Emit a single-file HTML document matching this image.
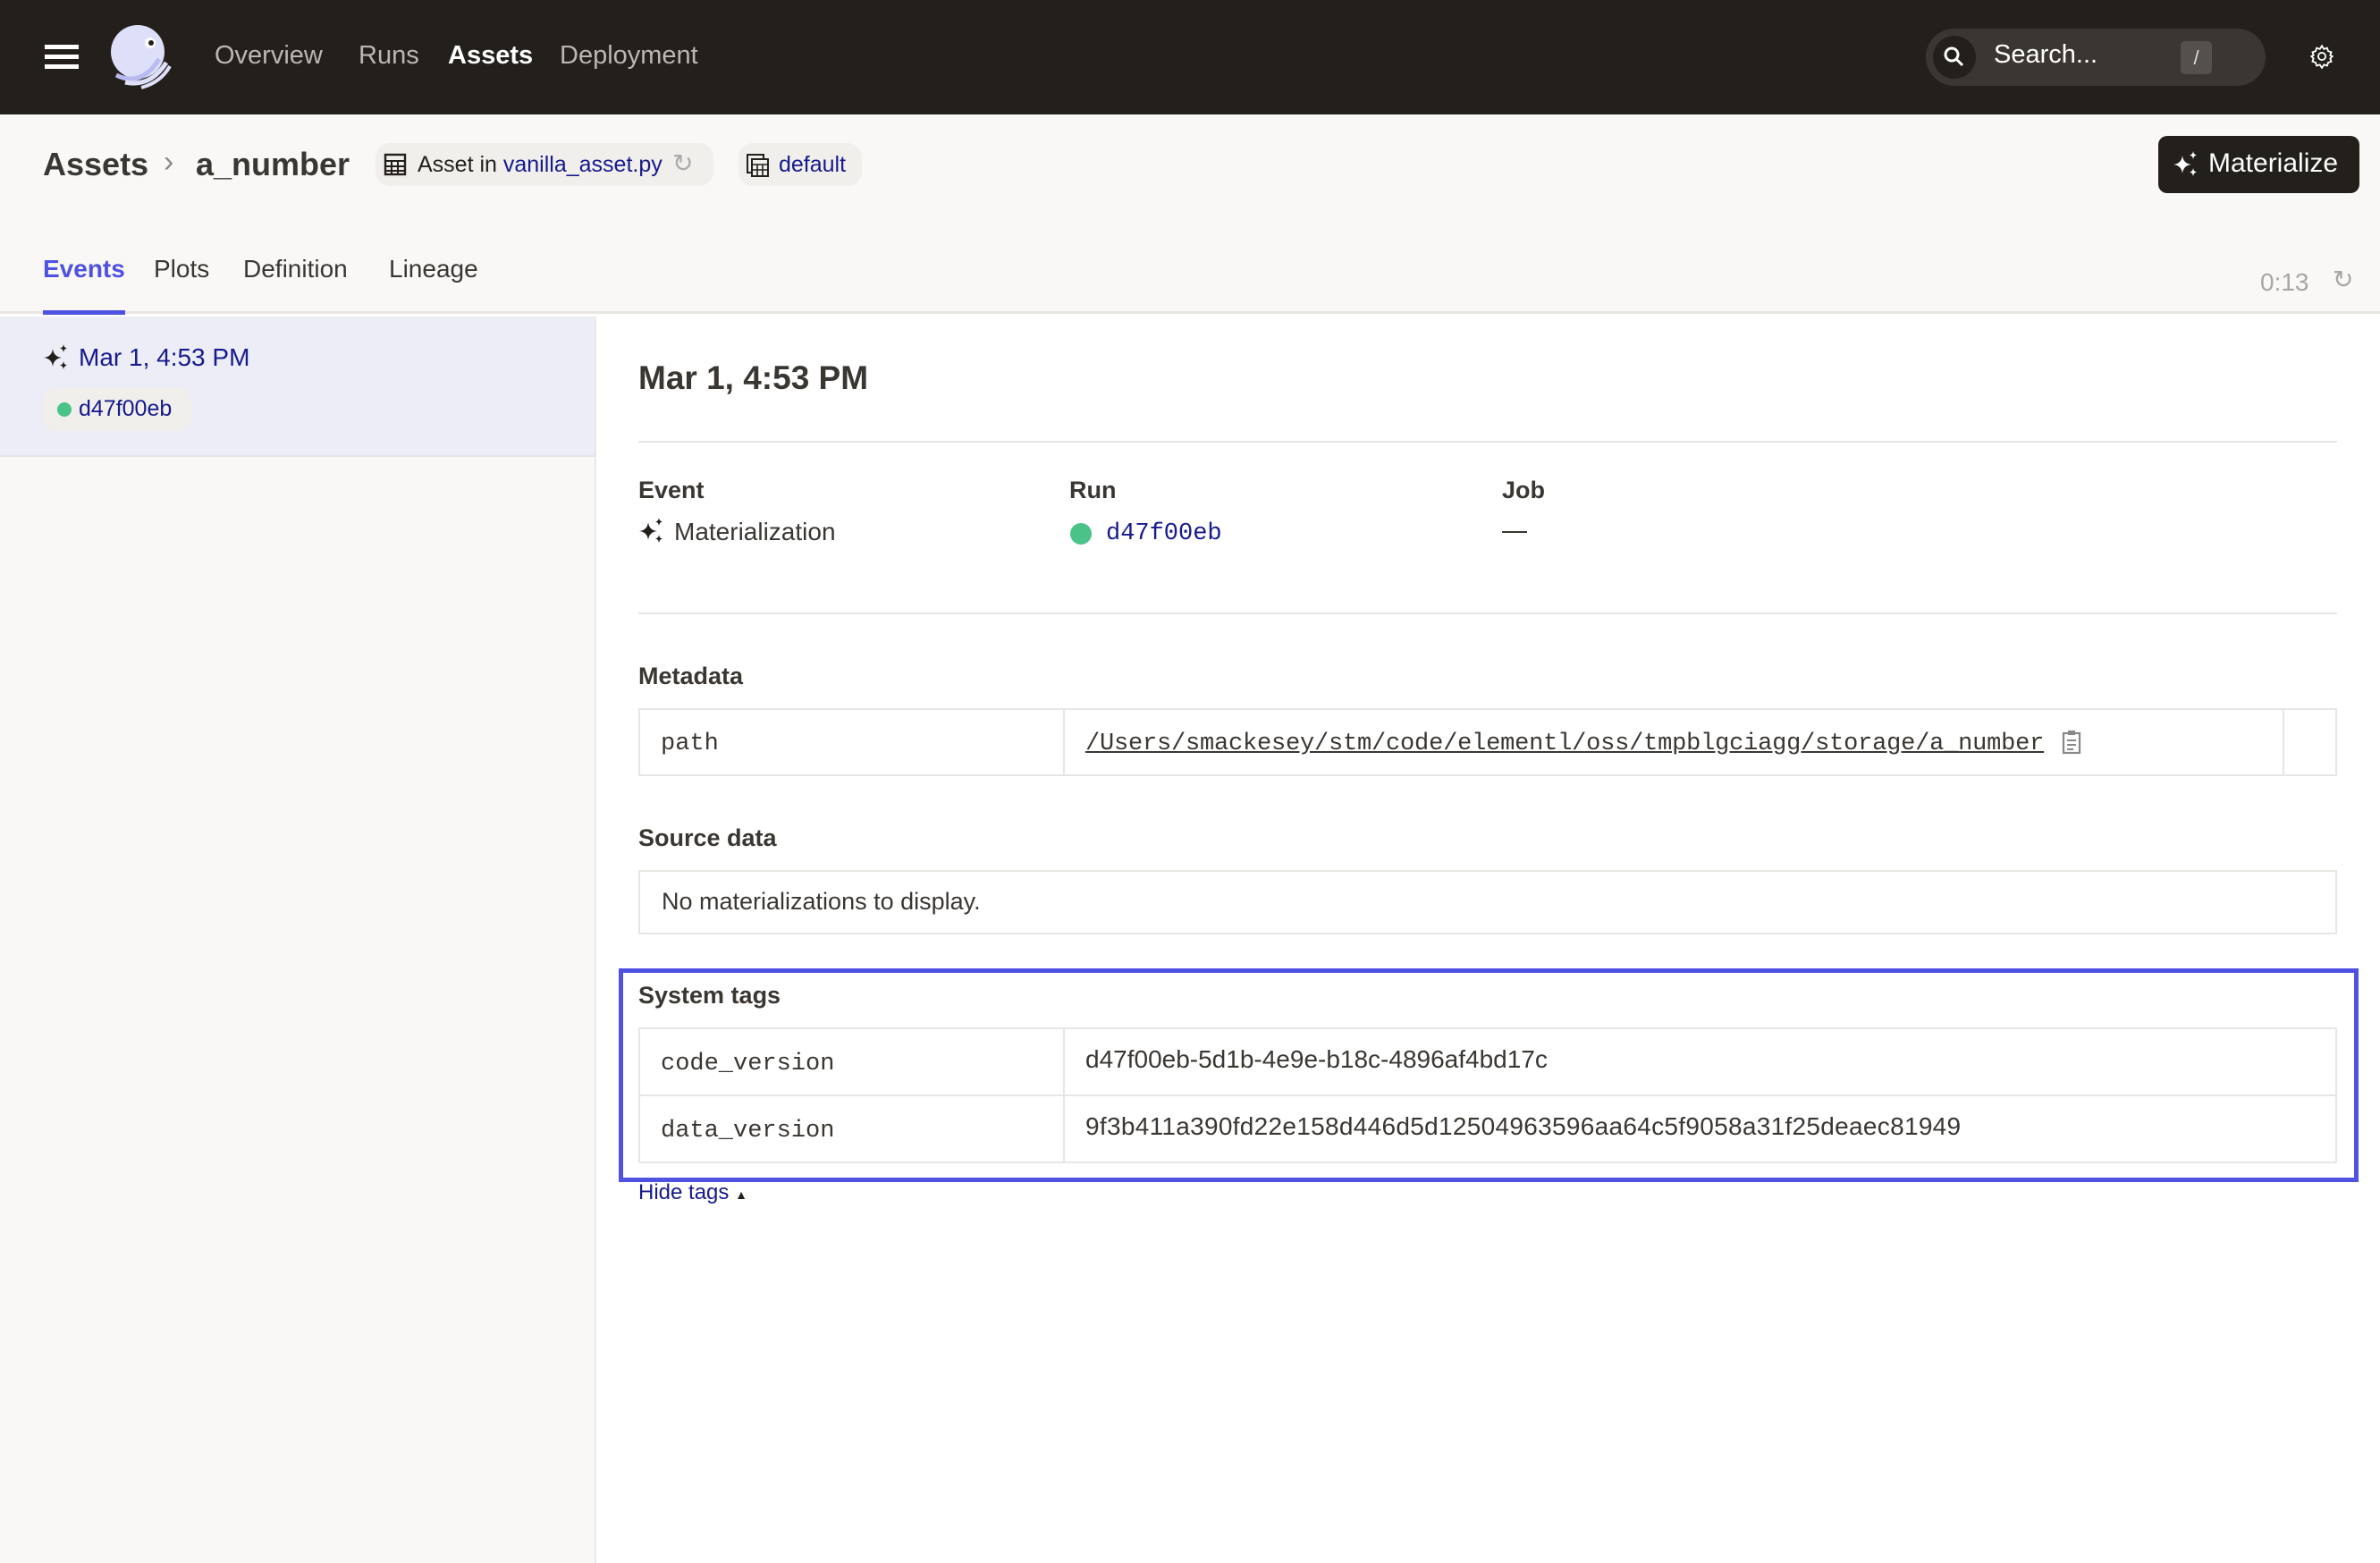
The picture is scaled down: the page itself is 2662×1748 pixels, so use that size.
<!DOCTYPE html>
<html><head><meta charset="utf-8"><style>
*{margin:0;padding:0;box-sizing:border-box}
body{width:2662px;height:1748px;background:#fff;font-family:"Liberation Sans",sans-serif;color:#231f1b;position:relative;overflow:hidden}
.a{position:absolute;white-space:nowrap}
.mono{font-family:"Liberation Mono",monospace}
</style></head><body>
<svg width="0" height="0" style="position:absolute"><defs><symbol id="sp" viewBox="0 0 30 30"><path d="M11 6 Q12 15 21 16 Q12 17 11 26 Q10 17 1 16 Q10 15 11 6Z"/><path d="M23 1 Q23.5 5 27 5.5 Q23.5 6 23 10 Q22.5 6 19 5.5 Q22.5 5 23 1Z"/><path d="M23 20 Q23.5 24 27 24.5 Q23.5 25 23 29 Q22.5 25 19 24.5 Q22.5 24 23 20Z"/></symbol></defs></svg>
<!-- header -->
<div class="a" style="left:0;top:0;width:2662px;height:128px;background:#231f1b"></div>
<div class="a" style="left:50px;top:50px;width:38px;height:5px;background:#fff;box-shadow:0 11px 0 #fff,0 22px 0 #fff"></div>
<svg class="a" style="left:118px;top:26px" width="78" height="76" viewBox="0 0 78 76">
<ellipse cx="36" cy="32" rx="30" ry="30" fill="#dedff8"/>
<circle cx="50" cy="22" r="6" fill="#fff"/><circle cx="51" cy="22" r="3" fill="#231f1b"/>
<path d="M12 58 Q40 72 60 40" stroke="#b8baf0" stroke-width="5" fill="none"/>
<path d="M22 66 Q50 72 68 44" stroke="#dedff8" stroke-width="5" fill="none"/>
<path d="M40 72 Q62 66 72 48" stroke="#dedff8" stroke-width="4" fill="none"/>
</svg>
<div class="a" style="left:240px;top:46px;font-size:29px;color:#bab6b2">Overview</div>
<div class="a" style="left:401px;top:46px;font-size:29px;color:#bab6b2">Runs</div>
<div class="a" style="left:501px;top:46px;font-size:29px;color:#fff;font-weight:bold">Assets</div>
<div class="a" style="left:626px;top:46px;font-size:29px;color:#bab6b2">Deployment</div>
<div class="a" style="left:2154px;top:32px;width:380px;height:64px;border-radius:32px;background:#3b3632"></div>
<div class="a" style="left:2162px;top:40px;width:48px;height:48px;border-radius:24px;background:#231f1b"></div>
<svg class="a" style="left:2173px;top:51px" width="26" height="26" viewBox="0 0 26 26"><circle cx="10" cy="10" r="7" stroke="#fff" stroke-width="3" fill="none"/><path d="M15 15 L22 22" stroke="#fff" stroke-width="3"/></svg>
<div class="a" style="left:2230px;top:45px;font-size:29px;color:#fff">Search...</div>
<div class="a" style="left:2439px;top:46px;width:35px;height:37px;border-radius:5px;background:#54504c;color:#ddd;font-size:22px;text-align:center;line-height:37px">/</div>
<svg class="a" style="left:2583px;top:49px" width="28" height="28" viewBox="0 0 24 24"><path d="M12 2l2 3 3-1 1 3 3 1-1 3 2 1-2 2 1 3-3 1-1 3-3-1-2 3-2-3-3 1-1-3-3-1 1-3-2-2 2-1-1-3 3-1 1-3 3 1z" stroke="#fff" stroke-width="1.6" fill="none"/><circle cx="12" cy="12" r="3.5" stroke="#fff" stroke-width="1.6" fill="none"/></svg>
<!-- top area -->
<div class="a" style="left:0;top:128px;width:2662px;height:223px;background:#f9f8f6;border-bottom:3px solid #e8e6e3"></div>
<div class="a" style="left:48px;top:163px;font-size:36px;font-weight:bold;color:#3a3632">Assets</div>
<div class="a" style="left:183px;top:162px;font-size:34px;color:#8d8985">›</div>
<div class="a" style="left:219px;top:163px;font-size:36px;font-weight:bold;color:#3a3632">a_number</div>
<div class="a" style="left:420px;top:160px;width:378px;height:48px;border-radius:16px;background:#f1efec"></div>
<svg class="a" style="left:429px;top:171px" width="26" height="26" viewBox="0 0 26 26"><rect x="2" y="2" width="22" height="22" stroke="#231f1b" stroke-width="2.4" fill="none"/><path d="M2 9H24M2 15H24M2 20H24M9 9V24M16 9V24" stroke="#231f1b" stroke-width="2"/></svg>
<div class="a" style="left:467px;top:170px;font-size:25px;color:#231f1b">Asset in <span style="color:#161a8c">vanilla_asset.py</span></div>
<div class="a" style="left:752px;top:166px;font-size:28px;color:#aaa">↻</div>
<div class="a" style="left:826px;top:160px;width:138px;height:48px;border-radius:16px;background:#f1efec"></div>
<svg class="a" style="left:834px;top:171px" width="28" height="28" viewBox="0 0 28 28"><rect x="2" y="2" width="18" height="20" stroke="#231f1b" stroke-width="2" fill="none"/><rect x="7" y="7" width="18" height="19" stroke="#231f1b" stroke-width="2" fill="#f1efec"/><path d="M7 13H25M7 19H25M13 13V26M19 13V26" stroke="#231f1b" stroke-width="1.6"/></svg>
<div class="a" style="left:871px;top:170px;font-size:25px;color:#161a8c">default</div>
<div class="a" style="left:2414px;top:152px;width:225px;height:64px;border-radius:10px;background:#231f1b"></div>
<svg class="a" style="left:2430px;top:168px;fill:#fff" width="30" height="30"><use href="#sp"/></svg>
<div class="a" style="left:2470px;top:166px;font-size:30px;color:#fff">Materialize</div>
<div class="a" style="left:48px;top:285px;font-size:28px;font-weight:bold;color:#4f52e0">Events</div>
<div class="a" style="left:172px;top:285px;font-size:28px;color:#3a3632">Plots</div>
<div class="a" style="left:272px;top:285px;font-size:28px;color:#3a3632">Definition</div>
<div class="a" style="left:435px;top:285px;font-size:28px;color:#3a3632">Lineage</div>
<div class="a" style="left:48px;top:347px;width:92px;height:5px;background:#4f52e0"></div>
<div class="a" style="left:2528px;top:300px;font-size:28px;color:#a9a6a2">0:13</div>
<div class="a" style="left:2609px;top:296px;font-size:28px;color:#a9a6a2">↻</div>
<!-- left panel -->
<div class="a" style="left:0;top:354px;width:667px;height:1394px;background:#f9f8f6;border-right:2px solid #ebe9e6"></div>
<div class="a" style="left:0;top:354px;width:665px;height:157px;background:#ededf7;border-bottom:2px solid #e6e4e8"></div>
<svg class="a" style="left:48px;top:384px;fill:#231f1b" width="30" height="30"><use href="#sp"/></svg>
<div class="a" style="left:88px;top:384px;font-size:28px;color:#161a8c">Mar 1, 4:53 PM</div>
<div class="a" style="left:48px;top:434px;width:166px;height:48px;border-radius:14px;background:#f1efec"></div>
<div class="a" style="left:64px;top:450px;width:16px;height:16px;border-radius:8px;background:#4ac288"></div>
<div class="a" style="left:88px;top:443px;font-size:25px;color:#161a8c">d47f00eb</div>
<!-- detail -->
<div class="a" style="left:714px;top:402px;font-size:37px;font-weight:bold;color:#3a3632">Mar 1, 4:53 PM</div>
<div class="a" style="left:714px;top:493px;width:1900px;height:2px;background:#e8e6e3"></div>
<div class="a" style="left:714px;top:533px;font-size:27px;font-weight:bold;color:#3a3632">Event</div>
<div class="a" style="left:1196px;top:533px;font-size:27px;font-weight:bold;color:#3a3632">Run</div>
<div class="a" style="left:1680px;top:533px;font-size:27px;font-weight:bold;color:#3a3632">Job</div>
<svg class="a" style="left:714px;top:578px;fill:#231f1b" width="30" height="30"><use href="#sp"/></svg>
<div class="a" style="left:754px;top:579px;font-size:28px;color:#3a3632">Materialization</div>
<div class="a" style="left:1197px;top:585px;width:24px;height:24px;border-radius:12px;background:#4ac288"></div>
<div class="a mono" style="left:1237px;top:582px;font-size:27px;color:#161a8c">d47f00eb</div>
<div class="a" style="left:1680px;top:594px;width:28px;height:2px;background:#3a3632"></div>
<div class="a" style="left:714px;top:685px;width:1900px;height:2px;background:#e8e6e3"></div>
<div class="a" style="left:714px;top:741px;font-size:27px;font-weight:bold;color:#3a3632">Metadata</div>
<div class="a" style="left:714px;top:792px;width:1900px;height:76px;border:2px solid #e8e6e3"></div>
<div class="a" style="left:1189px;top:792px;width:2px;height:76px;background:#e8e6e3"></div>
<div class="a" style="left:2553px;top:792px;width:2px;height:76px;background:#e8e6e3"></div>
<div class="a mono" style="left:739px;top:817px;font-size:27px;color:#3a3632">path</div>
<div class="a mono" style="left:1214px;top:817px;font-size:27px;letter-spacing:-0.2px;color:#3a3632;text-decoration:underline">/Users/smackesey/stm/code/elementl/oss/tmpblgciagg/storage/a_number</div>
<svg class="a" style="left:2305px;top:816px" width="24" height="28" viewBox="0 0 24 28"><rect x="3" y="4" width="18" height="22" stroke="#888" stroke-width="2.2" fill="none"/><rect x="8" y="1" width="8" height="5" fill="#888"/><path d="M7 12H17M7 17H17M7 22H14" stroke="#888" stroke-width="2"/></svg>
<div class="a" style="left:714px;top:922px;font-size:27px;font-weight:bold;color:#3a3632">Source data</div>
<div class="a" style="left:714px;top:973px;width:1900px;height:72px;border:2px solid #e8e6e3"></div>
<div class="a" style="left:740px;top:993px;font-size:27px;color:#3a3632">No materializations to display.</div>
<div class="a" style="left:692px;top:1083px;width:1946px;height:239px;border:5px solid #4f52e0"></div>
<div class="a" style="left:714px;top:1098px;font-size:27px;font-weight:bold;color:#3a3632">System tags</div>
<div class="a" style="left:714px;top:1149px;width:1900px;height:152px;border:2px solid #e8e6e3"></div>
<div class="a" style="left:714px;top:1224px;width:1900px;height:2px;background:#e8e6e3"></div>
<div class="a" style="left:1189px;top:1149px;width:2px;height:152px;background:#e8e6e3"></div>
<div class="a mono" style="left:739px;top:1175px;font-size:27px;color:#3a3632">code_version</div>
<div class="a mono" style="left:739px;top:1250px;font-size:27px;color:#3a3632">data_version</div>
<div class="a" style="left:1214px;top:1169px;font-size:28px;color:#3a3632">d47f00eb-5d1b-4e9e-b18c-4896af4bd17c</div>
<div class="a" style="left:1214px;top:1244px;font-size:28px;letter-spacing:0.3px;color:#3a3632">9f3b411a390fd22e158d446d5d12504963596aa64c5f9058a31f25deaec81949</div>
<div class="a" style="left:714px;top:1320px;font-size:24px;color:#161a8c">Hide tags <span style="font-size:14px;color:#231f1b">▲</span></div>
</body></html>
